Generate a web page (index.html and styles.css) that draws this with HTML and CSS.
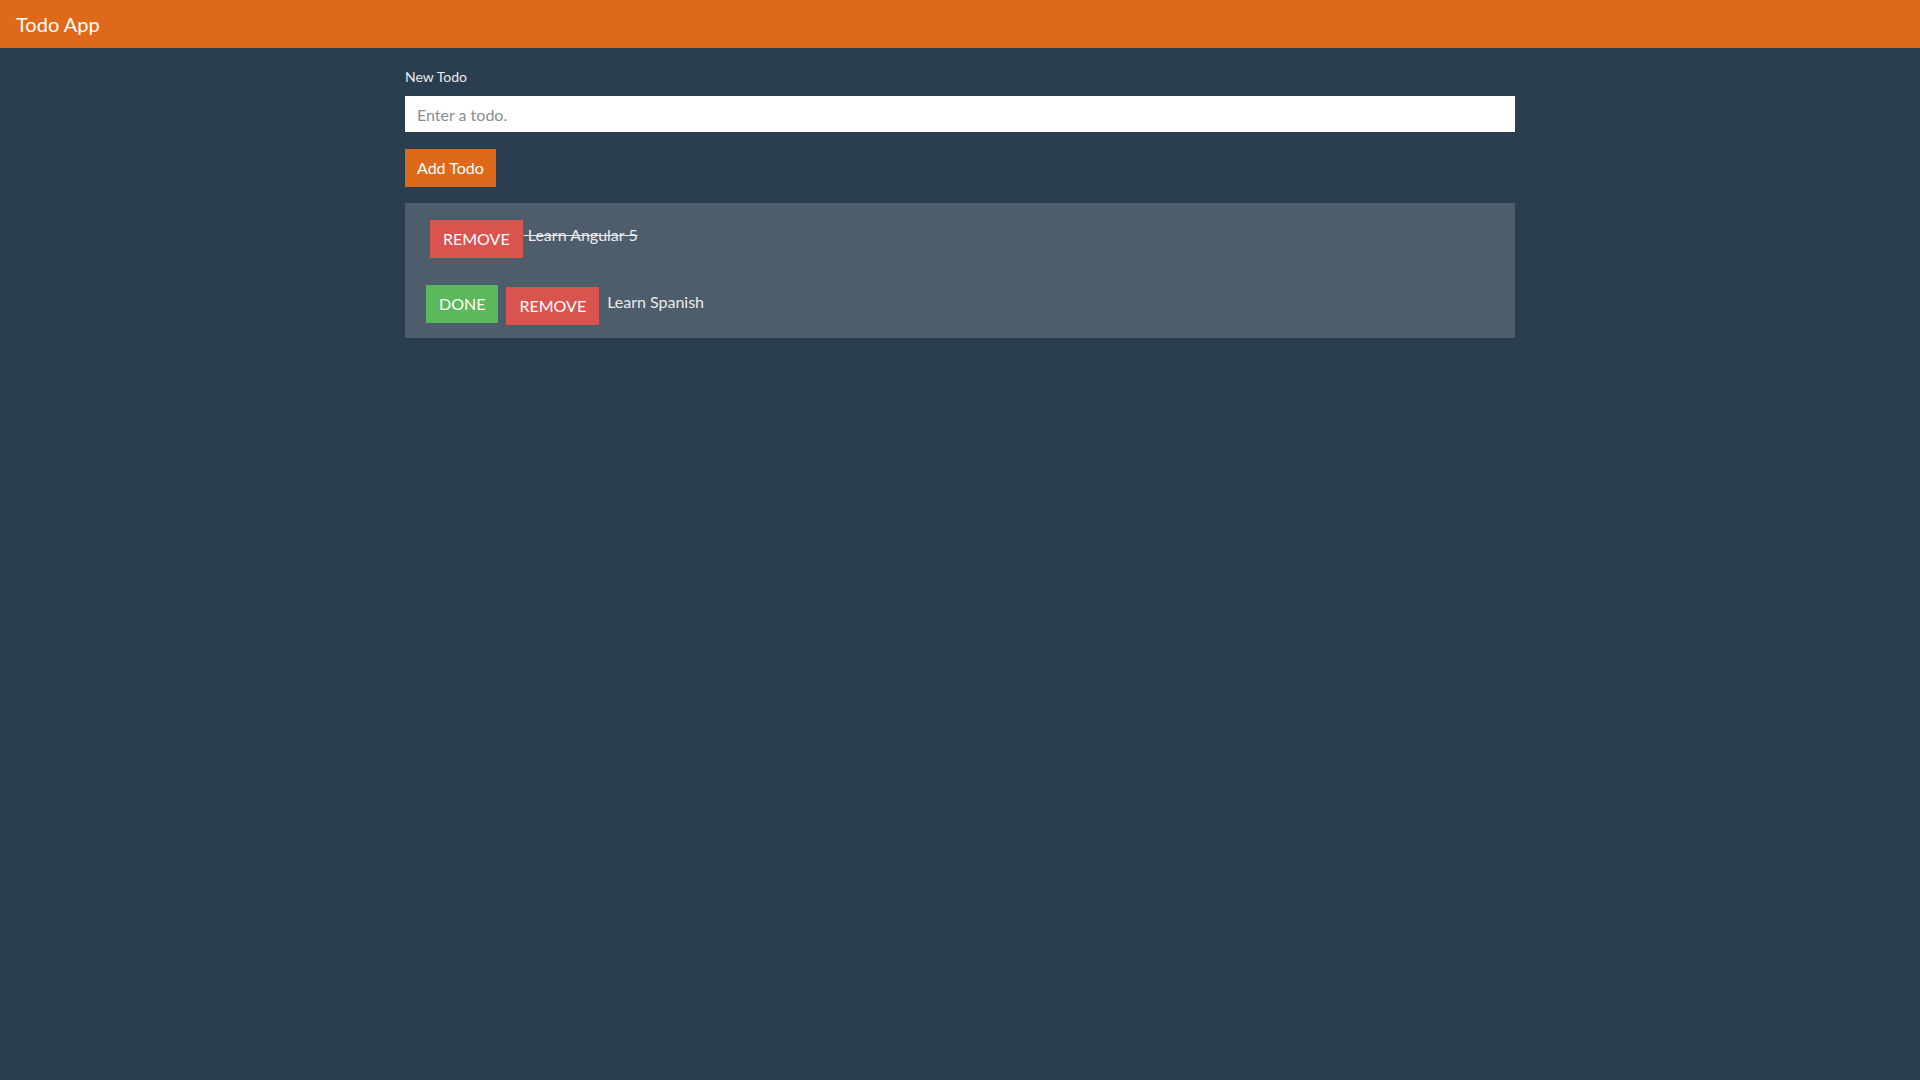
FILE: index.html
```html
<!DOCTYPE html>
<html lang="en">
<head>
<meta charset="utf-8">
<title>Todo App</title>
<link rel="stylesheet" href="styles.css">
</head>
<body>
<header class="navbar">
  <span class="brand">Todo App</span>
</header>
<main class="container">
  <label class="label" for="todo">New Todo</label>
  <input id="todo" class="input" type="text" placeholder="Enter a todo.">
  <button class="btn btn-primary add-btn">Add Todo</button>
  <ul class="todo-list">
    <li class="todo-row row-done">
      <button class="btn btn-danger">REMOVE</button>
      <span class="todo-text done">&nbsp;Learn Angular 5</span>
    </li>
    <li class="todo-row row-open">
      <button class="btn btn-success">DONE</button>
      <button class="btn btn-danger shift">REMOVE</button>
      <span class="todo-text open">Learn Spanish</span>
    </li>
  </ul>
</main>
</body>
</html>
```
FILE: styles.css
```css
* { box-sizing: border-box; }
html, body {
  margin: 0;
  padding: 0;
  background: #2b3e50;
  color: #ebebeb;
  font-family: Lato, "Open Sans", "Liberation Sans", sans-serif;
  font-size: 16px;
  line-height: 1.5;
}
.navbar {
  height: 48px;
  background: #df691a;
  display: flex;
  align-items: center;
  padding-left: 16px;
}
.brand {
  font-size: 20px;
  line-height: 30px;
  color: #ffffff;
}
.container {
  width: 1110px;
  margin: 0 auto;
  padding-top: 19px;
  display: flex;
  flex-direction: column;
  align-items: flex-start;
}
.label {
  font-size: 14px;
  line-height: 19px;
  color: #ebebeb;
  margin-bottom: 10px;
}
.input {
  width: 100%;
  height: 36px;
  border: 0;
  background: #ffffff;
  padding: 0 12px;
  font-family: inherit;
  font-size: 16px;
  color: #495057;
  outline: none;
}
.input::placeholder { color: #868e96; }
.btn {
  font-family: inherit;
  font-size: 16px;
  line-height: 24px;
  height: 38px;
  padding: 7px 13px;
  border: 0;
  color: #ffffff;
  white-space: nowrap;
  cursor: pointer;
}
.btn-primary { background: #df691a; }
.btn-danger { background: #d9534f; }
.btn-success { background: #5cb85c; }
.add-btn {
  margin-top: 17px;
  padding: 7px 12px;
}
.todo-list {
  list-style: none;
  margin: 16px 0 0;
  padding: 17px 0 13px;
  width: 100%;
  background: #4e5d6c;
}
.todo-row {
  display: flex;
  align-items: flex-start;
}
.row-done { padding-left: 25px; }
.row-open {
  padding-left: 21px;
  margin-top: 27px;
  height: 40px;
}
.row-open .btn-danger { margin-left: 8px; margin-top: 2px; }
.todo-text {
  line-height: 24px;
  color: #ebebeb;
}
.done {
  text-decoration: line-through;
  margin-top: 3px;
  margin-left: 1px;
}
.open {
  margin-top: 5px;
  margin-left: 8px;
}
```
